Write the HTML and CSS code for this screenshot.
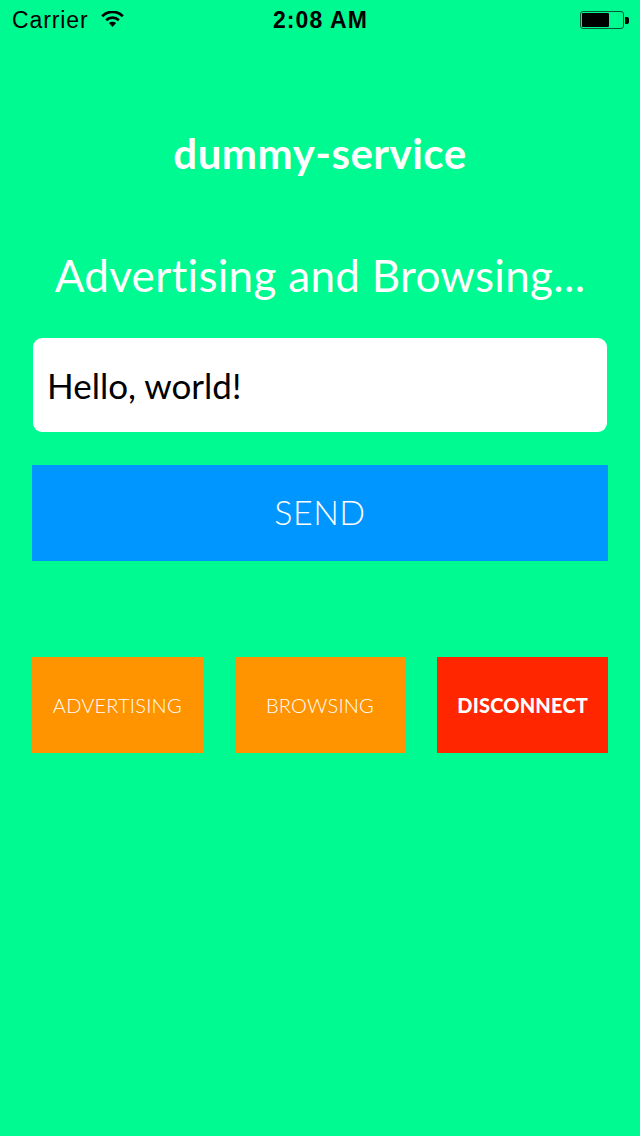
FILE: index.html
```html
<!DOCTYPE html>
<html>
<head>
<meta charset="utf-8">
<link rel="stylesheet" href="styles.css">
</head>
<body>
<div class="screen">
  <div class="status">
    <div class="status-left">
      <span class="carrier">Carrier</span>
      <svg class="wifi" width="25" height="17" viewBox="0 0 25 17">
        <path d="M12.5 16 L8.9 12.1 A5.2 5.2 0 0 1 16.1 12.1 Z" fill="#000"/>
        <path d="M6.2 9.2 A9 9 0 0 1 18.8 9.2" fill="none" stroke="#000" stroke-width="2.8"/>
        <path d="M2.2 5.2 A14.6 14.6 0 0 1 22.8 5.2" fill="none" stroke="#000" stroke-width="2.8"/>
      </svg>
    </div>
    <div class="time">2:08 AM</div>
    <div class="status-right">
      <div class="battery"><div class="battery-level"></div></div>
      <div class="battery-nub"></div>
    </div>
  </div>
  <div class="content">
    <h1 class="title">dummy-service</h1>
    <p class="subtitle">Advertising and Browsing...</p>
    <div class="field">Hello, world!</div>
    <div class="send">SEND</div>
    <div class="actions">
      <div class="action orange">ADVERTISING</div>
      <div class="action orange">BROWSING</div>
      <div class="action red">DISCONNECT</div>
    </div>
  </div>
</div>
</body>
</html>
```
FILE: styles.css
```css
html, body {
  margin: 0;
  padding: 0;
}
body {
  background: #00fa92;
  font-family: "Lato", "Open Sans", sans-serif;
  width: 640px;
  height: 1136px;
  overflow: hidden;
}
.screen {
  display: flex;
  flex-direction: column;
}
.status {
  height: 40px;
  display: flex;
  align-items: center;
  justify-content: space-between;
  padding: 0 11px 0 12px;
  font-family: "Liberation Sans", "Roboto", sans-serif;
  font-size: 23px;
  color: #000;
}
.status-left {
  display: flex;
  align-items: center;
  gap: 11px;
  width: 170px;
}
.carrier {
  letter-spacing: 0.9px;
}
.wifi {
  margin-top: -1px;
}
.time {
  font-weight: bold;
  font-size: 23px;
  letter-spacing: 1.1px;
}
.status-right {
  width: 170px;
  display: flex;
  justify-content: flex-end;
  align-items: center;
}
.battery {
  width: 40px;
  height: 14px;
  border: 1px solid #0b5a37;
  border-radius: 3px;
  padding: 1px;
  box-sizing: content-box;
  display: flex;
}
.battery-level {
  width: 27px;
  height: 14px;
  background: #000;
  border-radius: 1px;
}
.battery-nub {
  width: 4px;
  height: 7px;
  margin-left: 1px;
  background: #000;
  border-radius: 0 2px 2px 0;
}
.content {
  padding: 0 32px;
  display: flex;
  flex-direction: column;
}
.title {
  margin: 78px 0 0;
  height: 70px;
  line-height: 70px;
  text-align: center;
  color: #fff;
  font-weight: 700;
  font-size: 42px;
  letter-spacing: 0.5px;
}
.subtitle {
  margin: 62px 0 0;
  height: 50px;
  line-height: 50px;
  text-align: center;
  color: #fff;
  font-weight: 400;
  font-size: 44px;
  letter-spacing: 0.3px;
}
.field {
  margin-top: 38px;
  height: 94px;
  background: #fff;
  border-radius: 9px;
  display: flex;
  align-items: center;
  padding-left: 14px;
  font-size: 35px;
  color: #000;
  margin-left: 1px;
  margin-right: 1px;
}
.send {
  margin-top: 33px;
  height: 96px;
  padding-bottom: 4px;
  box-sizing: border-box;
  background: #0096ff;
  color: #fff;
  display: flex;
  align-items: center;
  justify-content: center;
  font-size: 34px;
  font-weight: 300;
  letter-spacing: 0.5px;
}
.actions {
  margin-top: 96px;
  display: grid;
  grid-template-columns: 1fr 1fr 1fr;
  gap: 32px;
}
.action {
  height: 96px;
  display: flex;
  align-items: center;
  justify-content: center;
  color: #fff;
  font-size: 20px;
  font-weight: 300;
  letter-spacing: 0.2px;
}
.orange {
  background: #ff9300;
}
.red {
  background: #ff2600;
  font-weight: 900;
}
```
